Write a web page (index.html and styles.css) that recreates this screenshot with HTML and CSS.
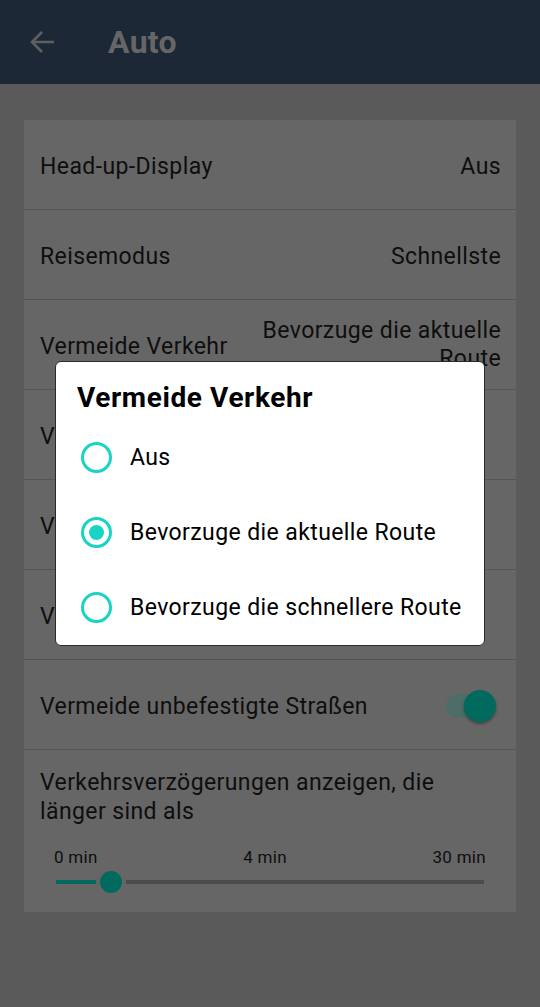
FILE: index.html
```html
<!DOCTYPE html>
<html lang="de">
<head>
<meta charset="utf-8">
<title>Auto</title>
<link rel="stylesheet" href="styles.css">
</head>
<body>
<header class="appbar">
  <svg class="back" width="26" height="26" viewBox="0 0 26 26"><path d="M25 13H3M13 3L3 13l10 10" fill="none" stroke="#5f5f5f" stroke-width="2.6"/></svg>
  <h1 class="title">Auto</h1>
</header>
<main class="content">
  <section class="card">
    <div class="row"><span class="label">Head-up-Display</span><span class="value">Aus</span></div>
    <div class="row"><span class="label">Reisemodus</span><span class="value">Schnellste</span></div>
    <div class="row"><span class="label low">Vermeide Verkehr</span><span class="value multi">Bevorzuge die aktuelle<br>Route</span></div>
    <div class="row"><span class="label">Vermeide Autobahnen</span></div>
    <div class="row"><span class="label">Vermeide Mautstraßen</span></div>
    <div class="row"><span class="label">Vermeide Fähren</span></div>
    <div class="row"><span class="label">Vermeide unbefestigte Straßen</span><span class="switch"><span class="track"></span><span class="thumb"></span></span></div>
    <div class="slider-row">
      <div class="label multi-label">Verkehrsverzögerungen anzeigen, die<br>länger sind als</div>
      <div class="ticks"><span>0 min</span><span>4 min</span><span>30 min</span></div>
      <div class="slider"><span class="fill"></span><span class="knob"></span></div>
    </div>
  </section>
</main>
<div class="dialog">
  <h2 class="dtitle">Vermeide Verkehr</h2>
  <div class="opt"><span class="radio"></span><span>Aus</span></div>
  <div class="opt"><span class="radio on"></span><span>Bevorzuge die aktuelle Route</span></div>
  <div class="opt"><span class="radio"></span><span>Bevorzuge die schnellere Route</span></div>
</div>
</body>
</html>
```
FILE: styles.css
```css
* { box-sizing: border-box; }
html, body { margin: 0; padding: 0; }
body {
  width: 540px;
  height: 1007px;
  background: #5a5a5a;
  font-family: Roboto, "Noto Sans", sans-serif;
  color: #0e0e0e;
  position: relative;
  overflow: hidden;
}
.appbar {
  height: 84px;
  background: #1c2835;
  display: flex;
  align-items: center;
  padding-left: 29px;
}
.back { display: block; margin-top: -1px; }
.title {
  margin: 0 0 0 53px;
  font-size: 32px;
  font-weight: 700;
  color: #666;
  letter-spacing: 0.3px;
}
.content { padding: 36px 24px 0; }
.card { background: #666; }
.row {
  height: 90px;
  border-bottom: 1px solid #555;
  display: flex;
  align-items: center;
  justify-content: space-between;
  padding: 3px 15px 0 16px;
  font-size: 23px;
  letter-spacing: 0.4px;
}
.label.low { margin-top: 0; }
.value { text-align: right; }
.value.multi { line-height: 28px; margin-top: -2px; }
.switch { position: relative; width: 50px; height: 32px; margin-right: 5px; }
.track {
  position: absolute; left: 0; top: 4px;
  width: 44px; height: 24px; border-radius: 12px;
  background: #4e6d68;
}
.thumb {
  position: absolute; left: 18px; top: 0;
  width: 32px; height: 32px; border-radius: 50%;
  background: #006a5e;
  box-shadow: 0 2px 3px rgba(0,0,0,0.35);
}
.slider-row { height: 162px; padding: 18px 30px 0 16px; }
.multi-label { font-size: 23px; line-height: 29px; letter-spacing: 0.4px; }
.ticks {
  display: flex; justify-content: space-between;
  font-size: 17px; letter-spacing: 0.3px; margin: 21px 0 0 14px;
}
.slider { position: relative; height: 24px; margin: 3px 2px 0 16px; }
.slider::before {
  content: ""; position: absolute; left: 0; right: 0; top: 10px; height: 4px;
  background: #4b4b4b;
}
.fill { position: absolute; left: 0; width: 44px; top: 10px; height: 4px; background: #006a5e; }
.knob {
  position: absolute; left: 44px; top: 1px;
  width: 22px; height: 22px; border-radius: 50%; background: #006a5e;
  box-shadow: 0 0 0 4px #666;
}
.dialog {
  position: absolute;
  left: 55px; top: 361px;
  width: 430px; height: 285px;
  background: #fff;
  border: 1px solid #2a2a2a;
  border-radius: 6px;
  padding: 20px 0 0 21px;
  color: #000;
}
.dtitle { margin: 0 0 6px; font-size: 28px; font-weight: 700; line-height: 32px; letter-spacing: 0.6px; }
.opt {
  height: 75px; display: flex; align-items: center;
  font-size: 23px; letter-spacing: 0.4px; gap: 18px; padding-left: 4px;
}
.radio {
  width: 31px; height: 31px; border-radius: 50%;
  border: 3px solid #17d4c4; position: relative; flex: none;
}
.radio.on::after {
  content: ""; position: absolute; left: 5px; top: 5px;
  width: 15px; height: 15px; border-radius: 50%; background: #17d4c4;
}
```
